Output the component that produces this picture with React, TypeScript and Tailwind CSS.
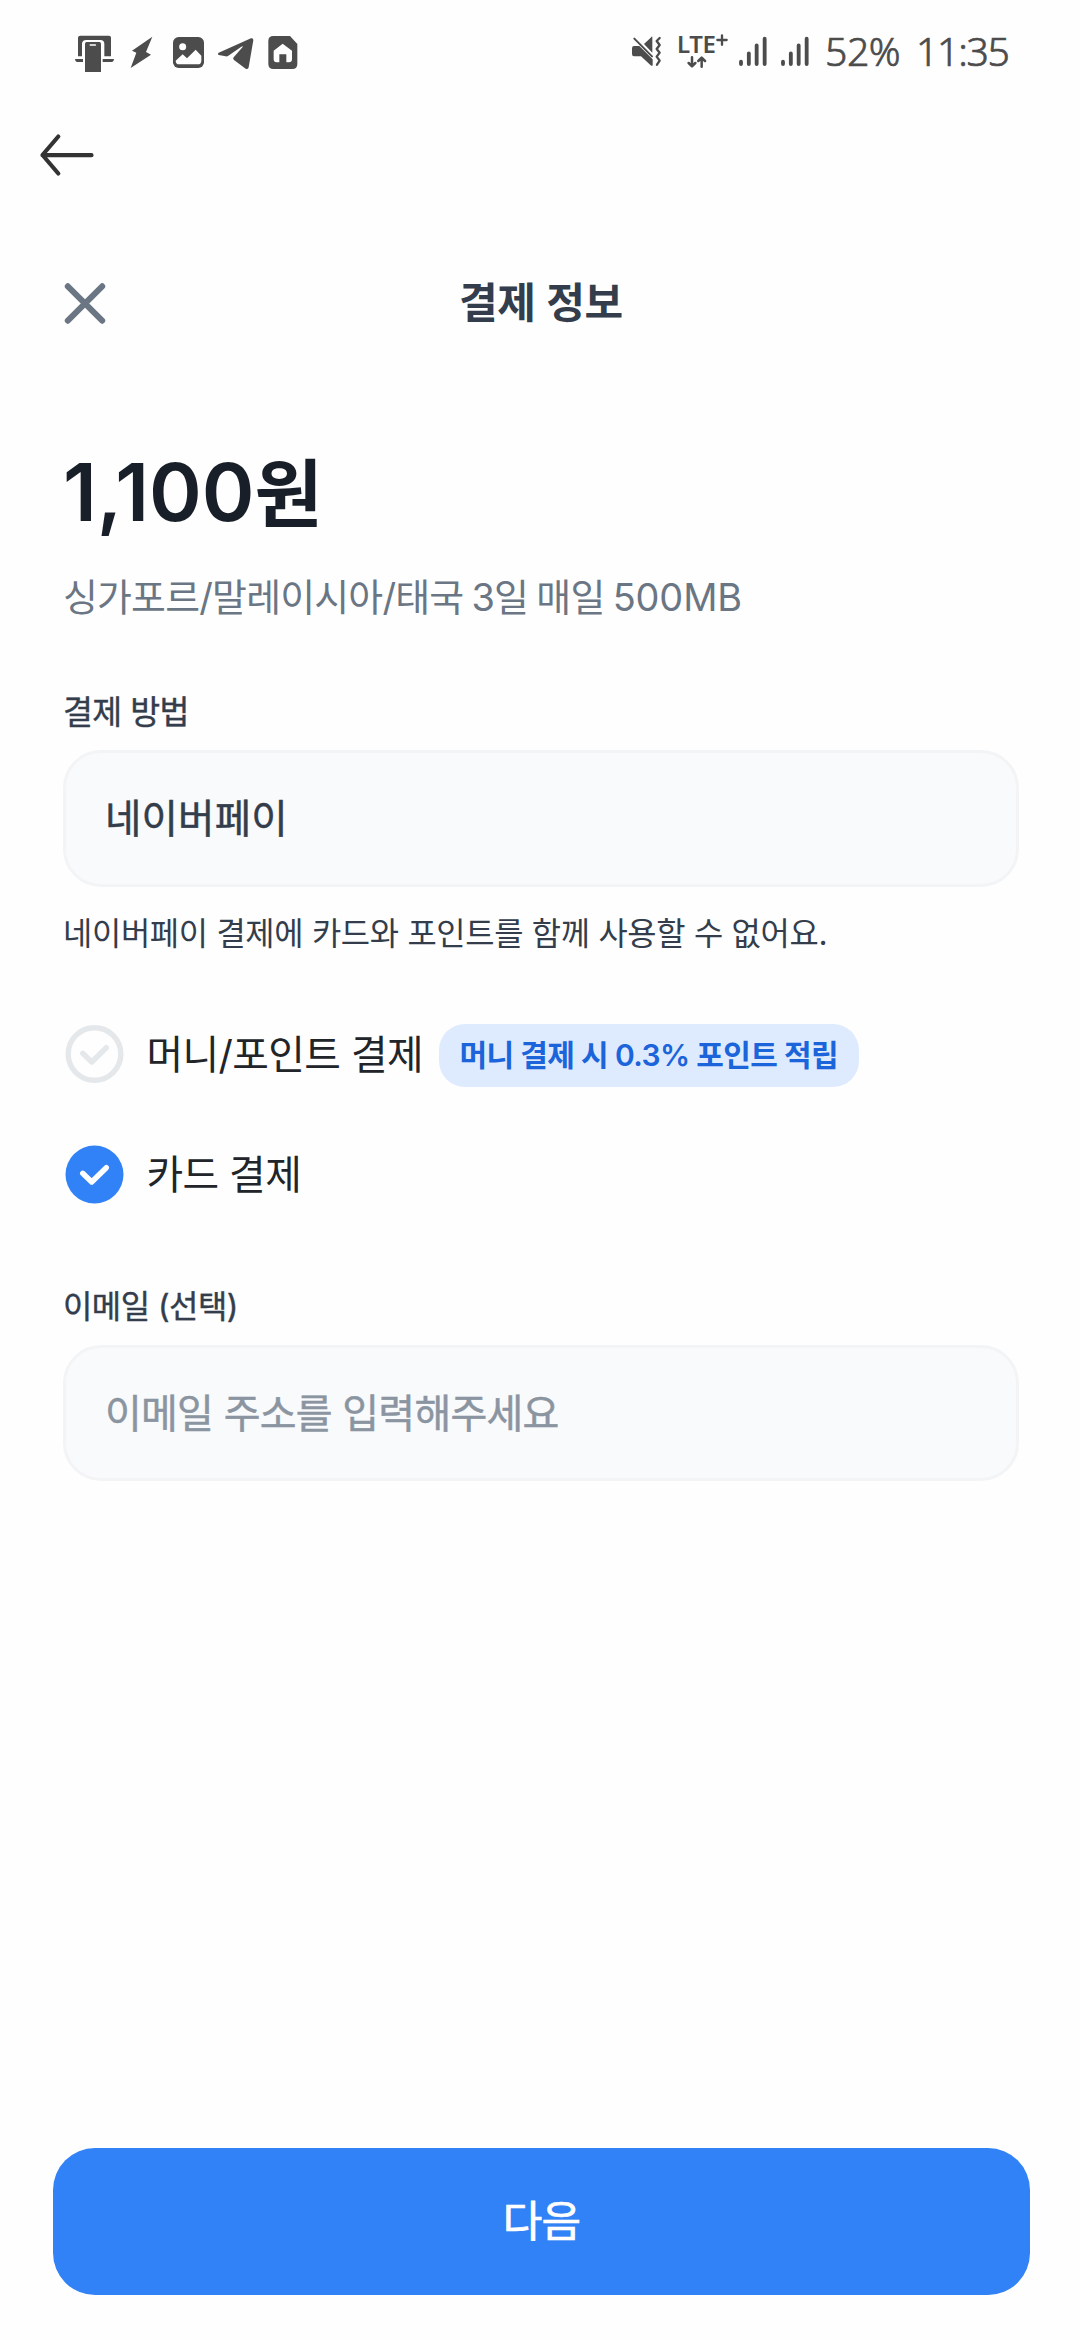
import type { ReactNode } from "react";

function NotificationIcons() {
  return (
    <svg className="h-[70px] w-[250px]" viewBox="0 0 750 210" fill="#4c4c4c">
      {/* phone in front of a screen */}
      <path d="M61 47H147Q153 47 153 53V109H133V72Q133 60 121 60H79Q66 60 66 72V109H54V53Q54 47 61 47Z" />
      <path d="M46 117H69V126H52Q46 126 45 117ZM128 117H162Q161 126 155 126H128Z" />
      <path d="M80 66H118Q123 66 123 71V156H75V71Q75 66 80 66Z" />
      <path d="M91 75H106" stroke="#fff" strokeWidth="5" strokeLinecap="round" />
      {/* bolt */}
      <path d="M277 50L216 92L229 98L212 144L273 104L258 96Z" />
      {/* picture */}
      <rect x="339" y="51" width="93" height="93" rx="17" />
      <circle cx="368" cy="80" r="10.5" fill="#fff" />
      <path d="M347 122L368 103L381 115L407 89L424 107V122Q424 133 413 133H358Q347 133 347 122Z" fill="#fff" />
      {/* paper plane */}
      <path d="M476 98L573 55Q580 53 580 61L566 142Q564 150 557 146L522 120Q517 116 521 112L548 81Q549 77 544 80L505 107Q501 110 497 109L476 105Q471 102 476 98Z" />
      {/* house on a cut card */}
      <path d="M640 48H690L712 72V132Q712 147 697 147H640Q625 147 625 132V63Q625 48 640 48Z" />
      <path d="M668 71L696 92V118Q696 127 687 127H679V103H658V127H650Q641 127 641 118V92Z" fill="#fff" />
    </svg>
  );
}

function MuteIcon() {
  return (
    <svg className="h-[70px] w-[46px] shrink-0" viewBox="0 0 138 210" fill="#4c4c4c">
      <path d="M97 50V98L72 72L92 53Q96 49 97 50Z" />
      <path d="M42 78H58L98 118V134Q98 140 92 136L63 109H42Q36 109 36 102V85Q36 78 42 78Z" />
      <path d="M43 56L96 109" stroke="#4c4c4c" strokeWidth="6" strokeLinecap="round" />
      <path
        d="M119 54L110 63L119 75L110 87L119 98L110 110L119 122L111 134"
        fill="none"
        stroke="#4c4c4c"
        strokeWidth="7"
        strokeLinecap="round"
        strokeLinejoin="round"
      />
    </svg>
  );
}

function DataArrows() {
  return (
    <svg
      className="ml-[10px] h-[12px] w-[20px]"
      viewBox="0 0 60 36"
      fill="none"
      stroke="#4c4c4c"
      strokeWidth="7.5"
      strokeLinecap="round"
      strokeLinejoin="round"
    >
      <path d="M15 4V31M5 21L15 31L25 21M44 32V5M34 15L44 5L54 15" />
    </svg>
  );
}

function SignalBars() {
  return (
    <svg
      className="h-[70px] w-[42px] shrink-0"
      viewBox="0 0 126 210"
      stroke="#4c4c4c"
      strokeWidth="11.5"
      strokeLinecap="round"
    >
      <path d="M9 125V132M32.500 100V132M56 76V132M80 56V132" />
    </svg>
  );
}

function StatusBar() {
  return (
    <div className="flex h-[101px] items-start justify-between pl-[60px] pr-[60px] pt-5 text-[#4c4c4c]">
      <NotificationIcons />
      <div className="flex w-[400px] items-start font-['Noto_Sans',sans-serif]">
        <MuteIcon />
        <div className="flex h-[70px] w-[70px] shrink-0 flex-col pl-[11px] pt-[9px]">
          <div className="flex h-[27px] items-start">
            <span className="text-[24px] font-semibold leading-[30px] tracking-[-0.400px]">LTE</span>
            <svg className="ml-[1px] mt-[5px] h-[12px] w-[12px] shrink-0" viewBox="0 0 36 36" stroke="#4c4c4c" strokeWidth="7" strokeLinecap="round">
              <path d="M18 4V32M4 18H32" />
            </svg>
          </div>
          <DataArrows />
        </div>
        <div className="flex w-[88px] shrink-0 pl-[2px]">
          <SignalBars />
          <SignalBars />
        </div>
        <span className="w-[91px] shrink-0 pl-[1px] text-[39.200px] font-light leading-[61px] tracking-[-0.500px] [-webkit-text-stroke:0.700px_#4c4c4c]">
          52%
        </span>
        <span className="shrink-0 pl-[1px] text-[39.200px] font-light leading-[61px] tracking-[-1.300px] [-webkit-text-stroke:0.700px_#4c4c4c]">
          11:35
        </span>
      </div>
    </div>
  );
}

function Radio({ checked }: { checked: boolean }) {
  return (
    <svg className="h-[64px] w-[63px] shrink-0" viewBox="0 0 63 64" fill="none">
      {checked ? (
        <circle cx="31.500" cy="32.500" r="29" fill="#3182f6" />
      ) : (
        <circle cx="31.500" cy="32" r="26.300" stroke="#e5e8eb" strokeWidth="5.400" />
      )}
      <path
        d="M19.700 31.300L28.700 40L43.300 25.700"
        stroke={checked ? "#fff" : "#e5e8eb"}
        strokeWidth="5.400"
        strokeLinecap="round"
        strokeLinejoin="round"
      />
    </svg>
  );
}

function Option({ checked, label, children }: { checked: boolean; label: string; children?: ReactNode }) {
  return (
    <div className="flex h-[64px] items-center">
      <Radio checked={checked} />
      <span className="ml-[20.500px] w-[292px] shrink-0 whitespace-nowrap pt-px text-[39.800px] leading-[64px] tracking-[-0.600px] text-[#212529]">
        {label}
      </span>
      {children}
    </div>
  );
}

export default function App() {
  return (
    <div className="flex h-[2340px] w-[1080px] flex-col overflow-hidden bg-[#fefefe] font-['Inter','Noto_Sans_CJK_KR',sans-serif]">
      <StatusBar />

      <div className="flex h-[108px] items-center pl-[38px]">
        <svg className="h-[46px] w-[58px]" viewBox="0 0 58 46" fill="none" stroke="#333" strokeWidth="4.200" strokeLinecap="round" strokeLinejoin="round">
          <path d="M20.300 4.500L4.500 23L20.300 41.500M4.500 23.200H53.500" />
        </svg>
      </div>

      <header className="mt-[44px] grid h-[100px] grid-cols-[1fr_auto_1fr] items-center pl-[64px] pr-[62px]">
        <svg className="-ml-px h-[44px] w-[44px]" viewBox="0 0 44 44" stroke="#6b7684" strokeWidth="6" strokeLinecap="round">
          <path d="M4.800 5.300L39.200 39.700M39.200 5.300L4.800 39.700" />
        </svg>
        <h1 className="text-[42px] font-semibold leading-[60px] tracking-[-0.200px] text-[#333d4b]">결제 정보</h1>
        <span />
      </header>

      <main className="flex flex-1 flex-col pl-[63px] pr-[61px]">
        <p className="mt-[91px] h-[96px] text-[80px] font-semibold leading-[96px] text-[#191f28]">
          1,100<span className="text-[74px] leading-none">원</span>
        </p>
        <p className="mt-[30px] text-[37.900px] leading-[54px] tracking-[-0.800px] text-[#6b7684] [word-spacing:-1.700px]">
          싱가포르/말레이시아/태국 3일 매일 <span className="tracking-[-0.100px]">500MB</span>
        </p>

        <p className="mt-[65px] text-[32.500px] leading-[48px] tracking-[-0.600px] text-[#333d4b] [-webkit-text-stroke:0.400px_#333d4b]">
          결제 방법
        </p>
        <div className="mt-[13px] flex h-[137px] items-center rounded-[38px] border-[3px] border-[#f3f4f6] bg-[#f9fafc] px-[39px] pt-[2px] text-[39.600px] tracking-[0.150px] text-[#333d4b] [-webkit-text-stroke:0.500px_#333d4b]">
          네이버페이
        </div>
        <p className="mt-[24px] text-[31.800px] leading-[45px] tracking-[-0.300px] text-[#333d4b]">
          네이버페이 결제에 카드와 포인트를 함께 사용할 수 없어요.
        </p>

        <div className="mt-[66px] flex flex-col gap-[56px]">
          <Option checked={false} label="머니/포인트 결제">
            <span className="mt-[3px] flex h-[63px] w-[420px] items-center whitespace-nowrap rounded-[26px] bg-[#deebff] pl-[21px] text-[30px] font-semibold leading-[61px] tracking-[-0.650px] text-[#1b64da]">
              머니 결제 시 0.3% 포인트 적립
            </span>
          </Option>
          <Option checked label="카드 결제" />
        </div>

        <p className="mt-[77px] text-[31.900px] leading-[48px] tracking-[-0.500px] text-[#333d4b] [-webkit-text-stroke:0.400px_#333d4b]">
          이메일 (선택)
        </p>
        <div className="mt-[14px] flex h-[136px] items-center rounded-[38px] border-[3px] border-[#f3f4f6] bg-[#f9fafc] px-[39px] pt-px text-[40px] tracking-[-0.750px] text-[#8b95a1] [-webkit-text-stroke:0.500px_#8b95a1]">
          이메일 주소를 입력해주세요
        </div>
      </main>

      <button className="mb-[45px] ml-[53px] flex h-[147px] w-[977px] items-center justify-center rounded-[42px] bg-[#3182f6] text-[43px] tracking-[-0.800px] text-white [-webkit-text-stroke:0.700px_#fff]">
        다음
      </button>
    </div>
  );
}
